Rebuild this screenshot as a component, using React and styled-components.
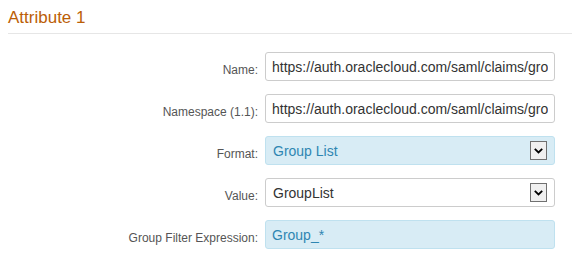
import styled, { createGlobalStyle } from 'styled-components'

const Global = createGlobalStyle`
  body {
    margin: 0;
    background: #fff;
    font-family: "Liberation Sans", Arial, sans-serif;
  }
`

const Section = styled.section`
  padding: 8px 1px 0 8px;
`

const Title = styled.h2`
  margin: 0;
  font-size: 17px;
  font-weight: normal;
  color: #bb5e06;
  line-height: 20px;
  padding-bottom: 5px;
  border-bottom: 1px solid #e6e6e6;
`

const Form = styled.div`
  display: grid;
  grid-template-columns: 250px 290px;
  column-gap: 7px;
  row-gap: 13px;
  padding-top: 18px;
`

const Label = styled.label`
  text-align: right;
  font-size: 12px;
  color: #555;
  padding-top: 11px;
`

const Field = styled.input`
  box-sizing: border-box;
  width: 290px;
  height: 29px;
  margin: 0;
  padding: 0 6px;
  border: 1px solid ${p => (p.$hl ? '#bfe1ef' : '#cccccc')};
  border-radius: 3px;
  background: ${p => (p.$hl ? '#d8ecf5' : '#fff')};
  color: ${p => (p.$hl ? '#2f86b2' : '#333')};
  font: 14px "Liberation Sans", Arial, sans-serif;
  outline: none;
`

const Select = styled.div`
  box-sizing: border-box;
  width: 290px;
  height: 29px;
  display: flex;
  align-items: center;
  justify-content: space-between;
  padding: 0 7px 0 7px;
  border: 1px solid ${p => (p.$hl ? '#bfe1ef' : '#cccccc')};
  border-radius: 3px;
  background: ${p => (p.$hl ? '#d8ecf5' : '#fff')};
  color: ${p => (p.$hl ? '#2f86b2' : '#333')};
  font-size: 14px;
`

const Arrow = styled.span`
  box-sizing: border-box;
  width: 17px;
  height: 19px;
  border: 1px solid #707070;
  background: #f0f0f0;
  display: flex;
  align-items: center;
  justify-content: center;
`

const Chevron = () => (
  <svg width="9" height="6" viewBox="0 0 9 6">
    <path d="M0.8 0.8 L4.5 4.5 L8.2 0.8" fill="none" stroke="#000" strokeWidth="1.8" />
  </svg>
)

const url = 'https://auth.oraclecloud.com/saml/claims/groups'

export default function App() {
  return (
    <>
      <Global />
      <Section>
        <Title>Attribute 1</Title>
        <Form>
          <Label>Name:</Label>
          <Field readOnly value={url} />
          <Label>Namespace (1.1):</Label>
          <Field readOnly value={url} />
          <Label>Format:</Label>
          <Select $hl>
            Group List
            <Arrow><Chevron /></Arrow>
          </Select>
          <Label>Value:</Label>
          <Select>
            GroupList
            <Arrow><Chevron /></Arrow>
          </Select>
          <Label>Group Filter Expression:</Label>
          <Field $hl readOnly value="Group_*" />
        </Form>
      </Section>
    </>
  )
}
